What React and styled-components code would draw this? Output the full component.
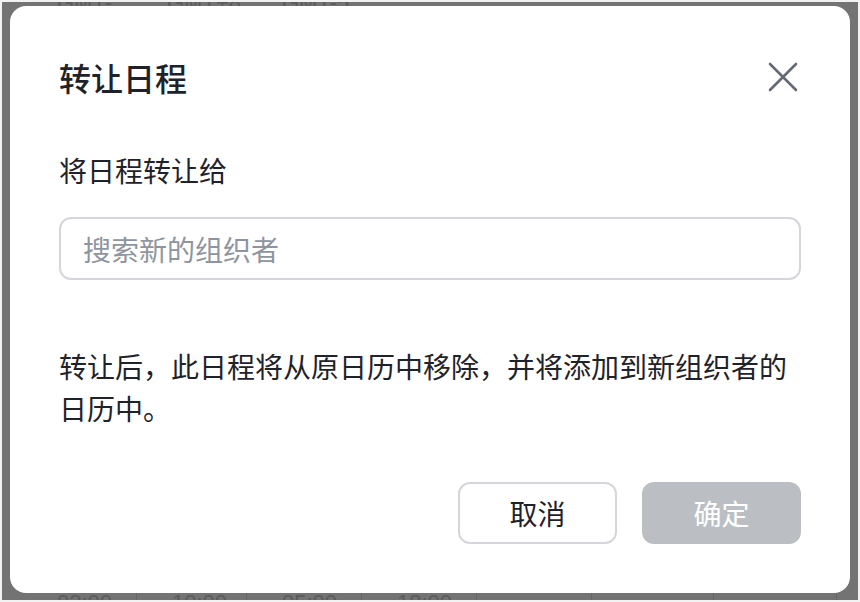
import React from "react";
import styled, { createGlobalStyle } from "styled-components";

const GlobalStyle = createGlobalStyle`
  html, body {
    margin: 0;
    padding: 0;
    background: #f2f2f2;
    font-family: "PingFang SC", "Noto Sans CJK SC", "Noto Sans", sans-serif;
  }
  * { box-sizing: border-box; }
`;

const Backdrop = styled.div`
  position: fixed;
  inset: 2px;
  background: #737373;
  display: flex;
  align-items: flex-start;
  justify-content: center;
  overflow: hidden;
`;

const PageRow = styled.div`
  position: absolute;
  left: 0;
  right: 0;
  display: flex;
  align-items: center;
  height: 20px;
  color: #5b5b5b;
  font-family: "Liberation Sans", sans-serif;
  font-size: 22px;
  ${(p) => (p.$top ? "top: -12px;" : "bottom: -10px;")}
`;

const PageCell = styled.span`
  width: ${(p) => p.$w}px;
  padding-left: ${(p) => p.$pad || 0}px;
  height: 100%;
  border-right: ${(p) => (p.$line ? "1px solid #666" : "none")};
`;

const Dialog = styled.div`
  position: relative;
  margin-top: 4px;
  width: 840px;
  background: #fff;
  border-radius: 16px;
  padding: 49px;
  display: flex;
  flex-direction: column;
`;

const Header = styled.div`
  display: flex;
  align-items: center;
  justify-content: space-between;
  height: 44px;
`;

const Title = styled.h2`
  margin: 0;
  font-size: 32px;
  line-height: 44px;
  font-weight: 500;
  color: #1f2329;
`;

const CloseButton = styled.button`
  border: none;
  background: none;
  padding: 0;
  margin-right: 3px;
  width: 30px;
  height: 30px;
  display: flex;
  cursor: pointer;
`;

const Label = styled.div`
  margin-top: 50px;
  font-size: 28px;
  line-height: 42px;
  color: #1f2329;
`;

const SearchInput = styled.input`
  margin-top: 26px;
  height: 63px;
  width: 100%;
  border: 2px solid #d4d6d9;
  border-radius: 12px;
  padding: 0 22px;
  font-family: inherit;
  font-size: 28px;
  color: #1f2329;
  outline: none;
  &::placeholder {
    color: #8f959e;
  }
`;

const Notice = styled.p`
  margin: 65px 0 0;
  font-size: 28px;
  line-height: 42px;
  color: #1f2329;
`;

const Footer = styled.div`
  margin-top: 53px;
  display: flex;
  justify-content: flex-end;
  gap: 25px;
`;

const Button = styled.button`
  width: 159px;
  height: 62px;
  border-radius: 12px;
  font-family: inherit;
  font-size: 28px;
  border: ${(p) => (p.$primary ? "none" : "2px solid #d4d6d9")};
  background: ${(p) => (p.$primary ? "#bbbfc4" : "#fff")};
  color: ${(p) => (p.$primary ? "#fff" : "#1f2329")};
  cursor: ${(p) => (p.$primary ? "not-allowed" : "pointer")};
`;

const topCells = [
  { w: 100, pad: 55, text: "GMT-8" },
  { w: 165, pad: 65, text: "GMT+8" },
  { w: 200, pad: 15, text: "GMT-5" },
];

const bottomCells = [
  { w: 135, pad: 55, text: "02:00", line: true },
  { w: 110, pad: 35, text: "10:00", line: true },
  { w: 115, pad: 35, text: "05:00", line: true },
  { w: 115, pad: 35, text: "18:00", line: true },
  { w: 115, line: true },
  { w: 122, line: true },
  { w: 123, line: true },
];

export default function App() {
  return (
    <>
      <GlobalStyle />
      <Backdrop>
        <PageRow $top>
          {topCells.map((c, i) => (
            <PageCell key={i} $w={c.w} $pad={c.pad}>
              {c.text}
            </PageCell>
          ))}
        </PageRow>
        <PageRow>
          {bottomCells.map((c, i) => (
            <PageCell key={i} $w={c.w} $pad={c.pad} $line={c.line}>
              {c.text}
            </PageCell>
          ))}
        </PageRow>
        <Dialog>
          <Header>
            <Title>转让日程</Title>
            <CloseButton aria-label="关闭">
              <svg width="30" height="30" viewBox="0 0 30 30" fill="none">
                <path
                  d="M2 2L28 28M28 2L2 28"
                  stroke="#646a73"
                  strokeWidth="2.6"
                  strokeLinecap="round"
                />
              </svg>
            </CloseButton>
          </Header>
          <Label>将日程转让给</Label>
          <SearchInput placeholder="搜索新的组织者" />
          <Notice>
            转让后，此日程将从原日历中移除，并将添加到新组织者的日历中。
          </Notice>
          <Footer>
            <Button>取消</Button>
            <Button $primary disabled>
              确定
            </Button>
          </Footer>
        </Dialog>
      </Backdrop>
    </>
  );
}
